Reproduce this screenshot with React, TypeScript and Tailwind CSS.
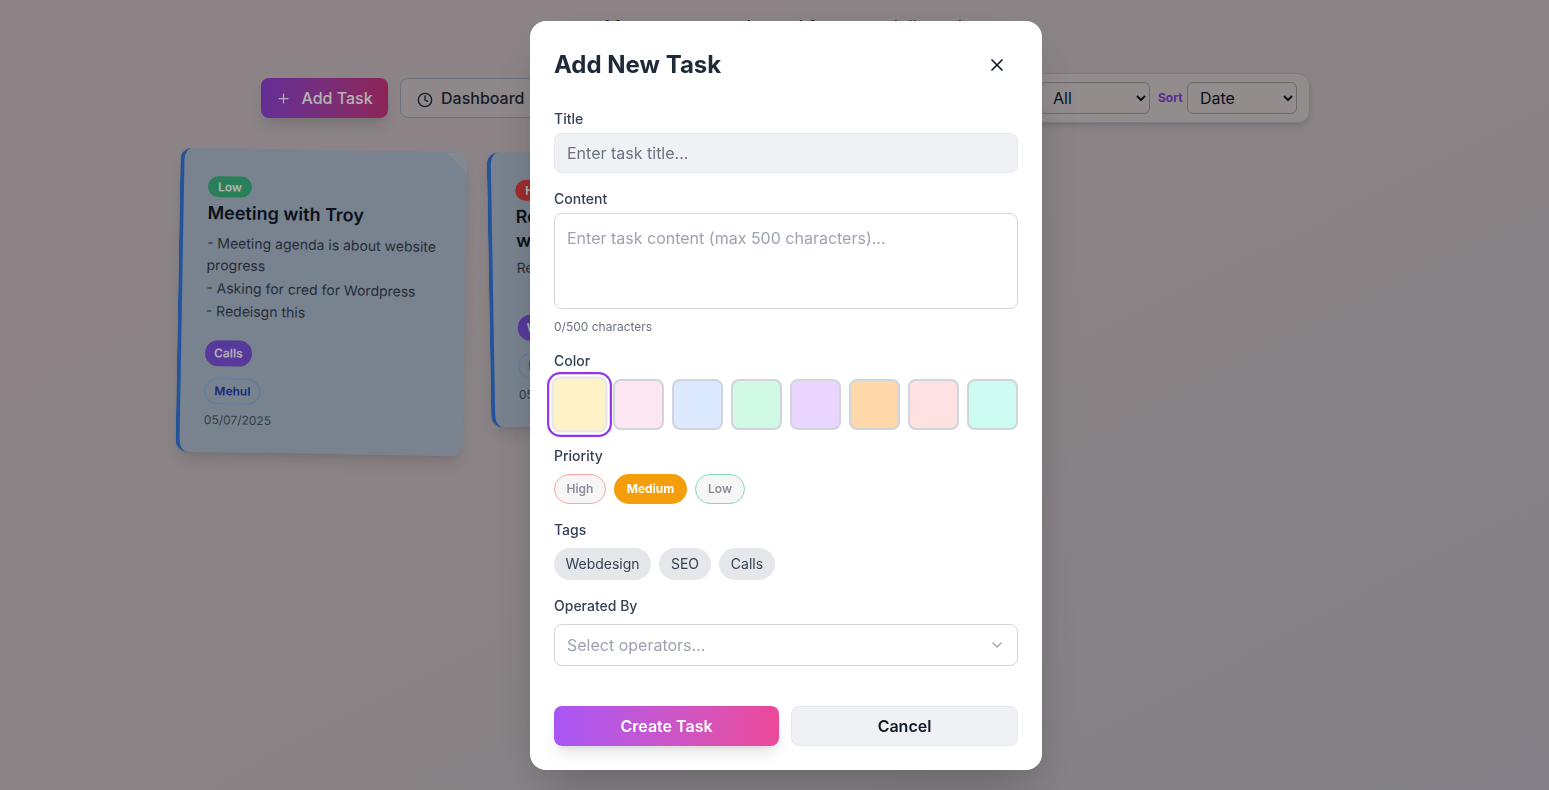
import { Plus, Clock, X, ChevronDown } from "lucide-react";

const swatches = ["bg-[#fef3c7]", "bg-[#fce7f3]", "bg-[#dbeafe]", "bg-[#d1fae5]", "bg-[#e9d5ff]", "bg-[#fed7aa]", "bg-[#fee2e2]", "bg-[#ccfbf1]"];

function Label({ children }: { children: React.ReactNode }) {
  return <label className="block text-sm leading-5 font-medium text-gray-700 mb-1">{children}</label>;
}

function Card({
  rotate,
  badge,
  badgeColor,
  title,
  lines,
  spacer,
  tag,
  person,
  date,
}: {
  rotate: string;
  badge: string;
  badgeColor: string;
  title: string;
  lines: string[];
  spacer: string;
  tag: string;
  person: string;
  date: string;
}) {
  return (
    <div className={`relative w-[287px] shrink-0 rounded-xl border-l-4 border-[#3478dc] bg-[#adbccd] pl-6 pr-6 pt-[25px] pb-6 shadow-lg ${rotate}`}>
      <div className="absolute top-0 right-0 w-[21px] h-[21px] rounded-tr-xl bg-[#bcc3d0] [clip-path:polygon(0_0,100%_0,100%_100%)]" />
      <span className={`inline-block rounded-full px-2.5 py-[3px] text-xs leading-[15px] font-semibold text-white ${badgeColor}`}>{badge}</span>
      <h3 className="mt-[4px] text-lg leading-6 font-semibold text-[#111827] mb-[7px]">{title}</h3>
      <div className={`text-sm leading-[22px] text-[#374151] ${spacer}`}>
        {lines.map((l, i) => (
          <p key={i} className="mb-px">{l}</p>
        ))}
      </div>
      <div className="mt-[18px] flex">
        <span className="rounded-full bg-[#7d52e0] px-[9px] h-[26px] flex items-center text-xs font-semibold text-white">{tag}</span>
      </div>
      <div className="mt-3 flex">
        <span className="rounded-full border border-[#7fb2ec] px-[9px] h-[26px] flex items-center text-xs font-semibold text-[#1e40af]">{person}</span>
      </div>
      <div className="mt-2 text-xs leading-4 text-[#4b5563]">{date}</div>
    </div>
  );
}

export default function App() {
  return (
    <div className="relative h-[790px] overflow-hidden bg-gradient-to-br from-[#c8bcc1] via-[#c6bcbf] to-[#bab8c0] font-['Inter',sans-serif]">
      <div className="w-[1572px] pt-[14px]">
        <p className="text-center text-lg leading-7 text-[#1f2937]">Manage your tasks and focus on daily task</p>
        <div className="ml-[261px] mt-[31px] flex w-[1049px] items-center justify-between">
          <div className="flex items-center gap-3">
            <button className="flex h-10 w-[127px] items-center justify-center gap-2.5 rounded-lg bg-gradient-to-r from-[#9040d8] to-[#ca337e] font-medium text-white shadow-lg">
              <Plus size={15} />
              Add Task
            </button>
            <button className="flex h-10 items-center gap-2 rounded-lg border border-[#9ca3af] bg-white/10 px-4 font-medium text-[#1f2937]">
              <Clock size={16} className="mt-1" />
              Dashboard
            </button>
          </div>
          <div className="flex h-[50px] items-center gap-2 rounded-xl border border-[#b0aeb3] bg-white/20 pl-3 pr-3 shadow-md">
            <span className="text-xs font-bold text-[#8040d0]">Filter</span>
            <select className="h-8 w-[110px] rounded-md border border-[#9a9a9e] bg-transparent px-2 text-[#111827]">
              <option>All</option>
            </select>
            <span className="-mr-1 w-[25px] text-xs font-bold whitespace-nowrap text-[#8040d0]">Sort</span>
            <select className="h-8 w-[110px] rounded-md border border-[#9a9a9e] bg-transparent px-2 text-[#111827]">
              <option>Date</option>
            </select>
          </div>
        </div>
        <div className="ml-[178px] mt-[27px] flex w-[1193px] items-start gap-6">
          <Card
            rotate="rotate-1"
            badge="Low"
            badgeColor="bg-[#3cb87e]"
            title="Meeting with Troy"
            lines={["- Meeting agenda is about website progress", "- Asking for cred for Wordpress", "- Redeisgn this"]}
            spacer=""
            tag="Calls"
            person="Mehul"
            date="05/07/2025"
          />
          <Card
            rotate="-rotate-1"
            badge="High"
            badgeColor="bg-[#e04040]"
            title="Redesign the company website"
            lines={["Redesign"]}
            spacer="-mt-[3px] pb-[17px]"
            tag="Webdesign"
            person="Priya"
            date="05/07/2025"
          />
        </div>
      </div>

      <div className="fixed inset-0 flex items-center justify-center bg-black/30 pl-[23px] backdrop-blur-[0.6px]">
        <div className="h-[749px] w-[512px] rounded-2xl bg-white px-6 pt-[25px] shadow-2xl">
          <div className="mb-[25px] flex h-[38px] items-center justify-between">
            <h2 className="text-2xl font-bold text-[#1f2937]">Add New Task</h2>
            <button className="mr-[11px] text-[#111827]">
              <X size={20} />
            </button>
          </div>

          <Label>Title</Label>
          <input
            placeholder="Enter task title..."
            className="h-10 w-full rounded-lg border border-[#e5e7eb] bg-[#f0f1f5] px-3 text-base text-[#111827] outline-none placeholder:text-[#6b7280]"
          />

          <div className="mt-4">
            <Label>Content</Label>
            <textarea
              placeholder="Enter task content (max 500 characters)..."
              className="block h-24 w-full resize-none rounded-lg border border-[#d1d5db] bg-white px-3 py-[13px] text-base leading-[22px] outline-none placeholder:text-[#9ca3af]"
            />
            <p className="mt-2.5 text-xs leading-4 text-[#6b7280]">0/500 characters</p>
          </div>

          <div className="mt-4">
            <label className="mb-2 block text-sm leading-5 font-medium text-gray-700">Color</label>
            <div className="grid grid-cols-8 gap-2">
              {swatches.map((c, i) => (
                <div
                  key={c}
                  className={`h-[51px] rounded-lg border-2 ${c} ${
                    i === 0
                      ? "scale-110 border-[#e5e7eb] ring-2 ring-[#9333ea] ring-offset-2"
                      : "border-[#d1d5db]"
                  }`}
                />
              ))}
            </div>
          </div>

          <div className="mt-4">
            <label className="mb-2 block text-sm leading-5 font-medium text-gray-700">Priority</label>
            <div className="flex gap-2">
              <span className="flex h-[30px] w-[52px] items-center justify-center rounded-full border border-[#fca5a5] bg-[#f6f6f7] text-xs font-semibold text-[#8b8f99]">High</span>
              <span className="flex h-[30px] w-[73px] items-center justify-center rounded-full bg-[#f59e0b] text-xs font-bold text-white">Medium</span>
              <span className="flex h-[30px] w-[50px] items-center justify-center rounded-full border border-[#86d9b8] bg-[#f6f6f7] text-xs font-semibold text-[#8b8f99]">Low</span>
            </div>
          </div>

          <div className="mt-4">
            <label className="mb-2 block text-sm leading-5 font-medium text-gray-700">Tags</label>
            <div className="flex gap-2">
              <span className="flex h-8 w-[97px] items-center justify-center rounded-full bg-[#e5e7eb] text-sm text-[#374151]">Webdesign</span>
              <span className="flex h-8 w-[52px] items-center justify-center rounded-full bg-[#e5e7eb] text-sm text-[#374151]">SEO</span>
              <span className="flex h-8 w-14 items-center justify-center rounded-full bg-[#e5e7eb] text-sm text-[#374151]">Calls</span>
            </div>
          </div>

          <div className="mt-4">
            <label className="mb-2 block text-sm leading-5 font-medium text-gray-700">Operated By</label>
            <div className="flex h-[42px] items-center justify-between rounded-lg border border-[#d1d5db] bg-white pl-3 pr-3">
              <span className="text-base text-[#9ca3af]">Select operators...</span>
              <ChevronDown size={16} className="text-[#9ca3af]" />
            </div>
          </div>

          <div className="mt-10 flex gap-3">
            <button className="h-10 w-[225px] rounded-lg bg-gradient-to-r from-[#a855f7] to-[#ec4899] font-semibold text-white shadow-lg">Create Task</button>
            <button className="h-10 w-[227px] rounded-lg border border-[#e5e7eb] bg-[#f0f1f5] font-semibold text-[#111827]">Cancel</button>
          </div>
        </div>
      </div>
    </div>
  );
}
